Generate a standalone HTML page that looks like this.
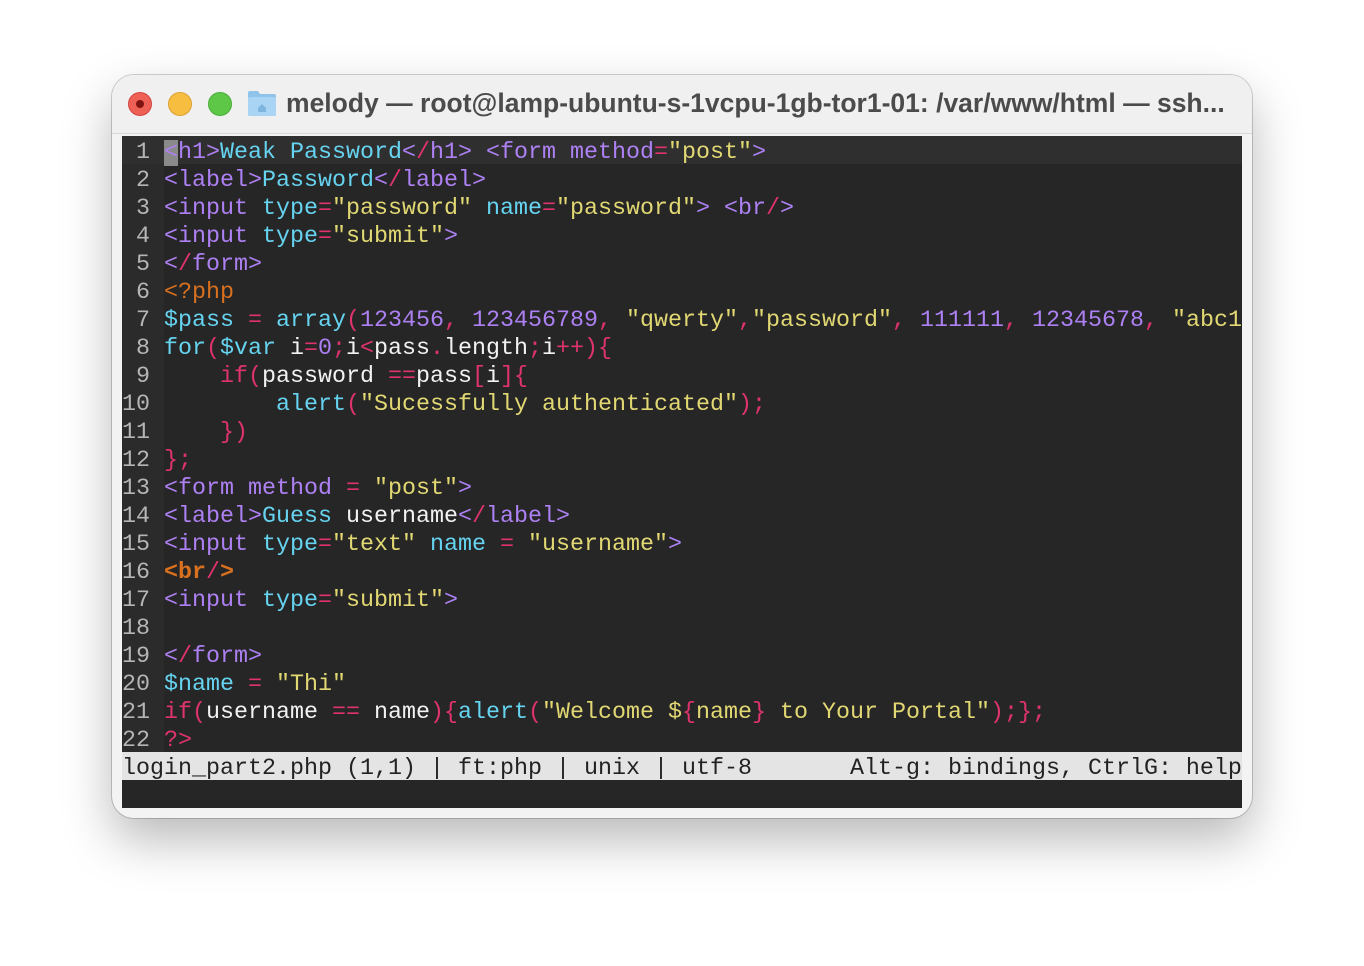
<!DOCTYPE html>
<html><head><meta charset="utf-8"><style>
body{margin:0;width:1364px;height:966px;background:#fff;position:relative;overflow:hidden;font-family:"Liberation Sans",sans-serif}
.win{position:absolute;left:112px;top:75px;width:1140px;height:743px;border-radius:22px;background:#f3f3f3;box-shadow:0 22px 50px rgba(0,0,0,.28),0 0 0 1px rgba(0,0,0,.18);overflow:hidden}
.tb{position:absolute;left:0;top:0;width:1140px;height:58px;background:#f0f0f0;border-bottom:1px solid #d8d8d8}
.dot{position:absolute;top:17px;width:24px;height:24px;border-radius:50%}
.title{position:absolute;left:174px;top:13px;font-size:26.5px;font-weight:bold;color:#4b4b4b;white-space:nowrap}
.term{position:absolute;left:10px;top:61px;width:1120px;height:672px;background:#262626;overflow:hidden}
pre{margin:0;font-family:"Liberation Mono",monospace;font-size:23.33px;line-height:28px;color:#f2f2f2;white-space:pre}
.ln{position:absolute;left:0;top:0;width:42px;height:616px;background:#2b2b2b}
.code{position:absolute;left:0;top:3px}
.cur{position:absolute;left:0;top:0;width:1120px;height:28px;background:#2f2f2f}
.p{color:#ad80f3}.c{color:#66d4f0}.y{color:#e2d873}.r{color:#e0336e}.o{color:#d7701f}.ob{color:#d7701f;font-weight:bold}
.status{position:absolute;left:0;top:616px;width:1120px;height:28px;background:#e4e4e4}
.status pre{color:#222;position:relative;top:3px}
.cb{background:#8a8a8a}
</style></head><body>
<div class="win">
<div class="tb">
<div class="dot" style="left:16px;background:#ee5f56;border:1px solid #d2463e;width:22px;height:22px"><div style="position:absolute;left:7px;top:7px;width:8px;height:8px;border-radius:50%;background:#7e1410"></div></div>
<div class="dot" style="left:56px;background:#f6bd40;border:1px solid #dca231;width:22px;height:22px"></div>
<div class="dot" style="left:96px;background:#5fc748;border:1px solid #47ad35;width:22px;height:22px"></div>
<svg style="position:absolute;left:135px;top:14px" width="30" height="28" viewBox="0 0 30 28"><path d="M1 4 Q1 2 3 2 H11 L13 5 H27 Q29 5 29 7 V25 Q29 27 27 27 H3 Q1 27 1 25Z" fill="#8fc3ea"/><rect x="1" y="8" width="28" height="19" rx="2" fill="#a9d4f3"/><path d="M11 19 L15 15 L19 19 V23 H11Z" fill="#7fb6df"/></svg>
<div class="title">melody — root@lamp-ubuntu-s-1vcpu-1gb-tor1-01: /var/www/html — ssh...</div>
</div>
<div class="term">
<div class="ln"></div>
<div class="cur"></div>
<div class="code"><pre><span style="color:#b5b5b5"> 1 </span><span class="p"><span class="cb">&lt;</span>h1&gt;</span><span class="c">Weak Password</span><span class="p">&lt;</span><span class="r">/</span><span class="p">h1&gt; &lt;form</span> <span class="p">method</span><span class="r">=</span><span class="y">"post"</span><span class="p">&gt;</span>
<span style="color:#b5b5b5"> 2 </span><span class="p">&lt;label&gt;</span><span class="c">Password</span><span class="p">&lt;</span><span class="r">/</span><span class="p">label&gt;</span>
<span style="color:#b5b5b5"> 3 </span><span class="p">&lt;input</span> <span class="c">type</span><span class="r">=</span><span class="y">"password"</span> <span class="c">name</span><span class="r">=</span><span class="y">"password"</span><span class="p">&gt; &lt;br</span><span class="r">/</span><span class="p">&gt;</span>
<span style="color:#b5b5b5"> 4 </span><span class="p">&lt;input</span> <span class="c">type</span><span class="r">=</span><span class="y">"submit"</span><span class="p">&gt;</span>
<span style="color:#b5b5b5"> 5 </span><span class="p">&lt;</span><span class="r">/</span><span class="p">form&gt;</span>
<span style="color:#b5b5b5"> 6 </span><span class="o">&lt;?php</span>
<span style="color:#b5b5b5"> 7 </span><span class="c">$pass</span> <span class="r">=</span> <span class="c">array</span><span class="r">(</span><span class="p">123456</span><span class="r">,</span> <span class="p">123456789</span><span class="r">,</span> <span class="y">"qwerty"</span><span class="r">,</span><span class="y">"password"</span><span class="r">,</span> <span class="p">111111</span><span class="r">,</span> <span class="p">12345678</span><span class="r">,</span> <span class="y">"abc1</span>
<span style="color:#b5b5b5"> 8 </span><span class="c">for</span><span class="r">(</span><span class="c">$var</span> i<span class="r">=</span><span class="p">0</span><span class="r">;</span>i<span class="r">&lt;</span>pass<span class="r">.</span>length<span class="r">;</span>i<span class="r">++){</span>
<span style="color:#b5b5b5"> 9 </span>    <span class="r">if(</span>password <span class="r">==</span>pass<span class="r">[</span>i<span class="r">]{</span>
<span style="color:#b5b5b5">10 </span>        <span class="c">alert</span><span class="r">(</span><span class="y">"Sucessfully authenticated"</span><span class="r">);</span>
<span style="color:#b5b5b5">11 </span>    <span class="r">})</span>
<span style="color:#b5b5b5">12 </span><span class="r">};</span>
<span style="color:#b5b5b5">13 </span><span class="p">&lt;form</span> <span class="p">method</span> <span class="r">=</span> <span class="y">"post"</span><span class="p">&gt;</span>
<span style="color:#b5b5b5">14 </span><span class="p">&lt;label&gt;</span><span class="c">Guess</span> username<span class="p">&lt;</span><span class="r">/</span><span class="p">label&gt;</span>
<span style="color:#b5b5b5">15 </span><span class="p">&lt;input</span> <span class="c">type</span><span class="r">=</span><span class="y">"text"</span> <span class="c">name</span> <span class="r">=</span> <span class="y">"username"</span><span class="p">&gt;</span>
<span style="color:#b5b5b5">16 </span><span class="ob">&lt;br</span><span class="r">/</span><span class="ob">&gt;</span>
<span style="color:#b5b5b5">17 </span><span class="p">&lt;input</span> <span class="c">type</span><span class="r">=</span><span class="y">"submit"</span><span class="p">&gt;</span>
<span style="color:#b5b5b5">18 </span>
<span style="color:#b5b5b5">19 </span><span class="p">&lt;</span><span class="r">/</span><span class="p">form&gt;</span>
<span style="color:#b5b5b5">20 </span><span class="c">$name</span> <span class="r">=</span> <span class="y">"Thi"</span>
<span style="color:#b5b5b5">21 </span><span class="r">if(</span>username <span class="r">==</span> name<span class="r">){</span><span class="c">alert</span><span class="r">(</span><span class="y">"Welcome $</span><span class="r">{</span><span class="y">name</span><span class="r">}</span><span class="y"> to Your Portal"</span><span class="r">);};</span>
<span style="color:#b5b5b5">22 </span><span class="r">?&gt;</span></pre></div>
<div class="status"><pre>login_part2.php (1,1) | ft:php | unix | utf-8       Alt-g: bindings, CtrlG: help</pre></div>
</div>
</div>
</body></html>
